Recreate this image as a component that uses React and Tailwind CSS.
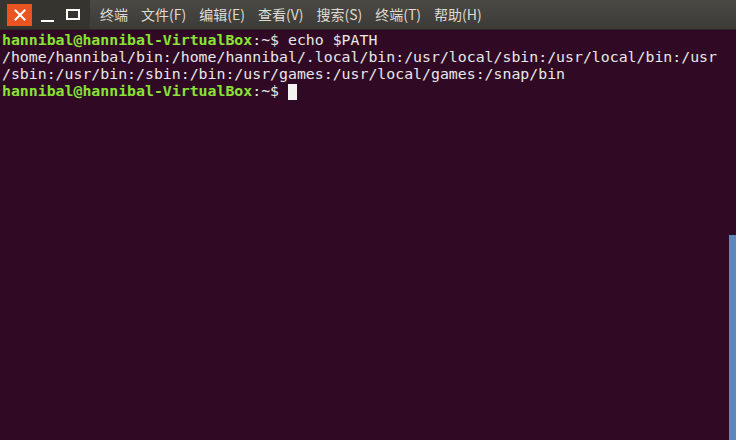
const menus = ["文件(F)", "编辑(E)", "查看(V)", "搜索(S)", "终端(T)", "帮助(H)"];

const Prompt = () => (
  <>
    <span className="font-bold text-[#8ae234]">hannibal@hannibal-VirtualBox</span>
    <span className="text-[#e8e8e8]">:~$ </span>
  </>
);

export default function App() {
  return (
    <div className="w-[736px] h-[440px] flex flex-col bg-[#300a24] overflow-hidden">
      <div className="h-[30px] flex items-center bg-gradient-to-b from-[#4a4944] to-[#3c3b37] border-b border-[#2a2925]">
        <div className="flex items-center h-full pl-[7px] pr-[6px] bg-[#35342f]">
          <div className="w-[25px] h-[22px] bg-[#e95420] flex items-center justify-center">
            <svg width="12" height="12" viewBox="0 0 12 12">
              <path d="M1.5 1.5 L10.5 10.5 M10.5 1.5 L1.5 10.5" stroke="#fff" strokeWidth="2" strokeLinecap="square" />
            </svg>
          </div>
          <div className="w-[30px] h-[22px] flex items-end justify-center pb-[4px]">
            <div className="w-[13px] h-[2px] bg-white" />
          </div>
          <div className="w-[22px] h-[22px] flex items-center justify-center">
            <div className="w-[14px] h-[11px] border-2 border-white" />
          </div>
        </div>
        <div
          className="flex items-center gap-[13px] pl-[10px] text-[14px] text-[#dfdbd2]"
          style={{ fontFamily: '"Noto Sans CJK SC", "Noto Sans", sans-serif' }}
        >
          <span>终端</span>
          {menus.map((m) => (
            <span key={m}>{m}</span>
          ))}
        </div>
      </div>
      <div className="flex-1 relative">
        <div
          className="pl-[2px] pt-[2px] text-[14.85px] leading-[17px] text-[#e8e8e8] whitespace-pre"
          style={{ fontFamily: '"DejaVu Sans Mono", "Liberation Mono", monospace' }}
        >
          <div>
            <Prompt />
            echo $PATH
          </div>
          <div>/home/hannibal/bin:/home/hannibal/.local/bin:/usr/local/sbin:/usr/local/bin:/usr</div>
          <div>/sbin:/usr/bin:/sbin:/bin:/usr/games:/usr/local/games:/snap/bin</div>
          <div className="flex items-center">
            <Prompt />
            <span className="inline-block w-[9px] h-[16px] bg-[#f2f2f2]" />
          </div>
        </div>
        <div className="absolute right-0 top-[205px] bottom-0 w-[7px] bg-[#5f86bd]" />
      </div>
    </div>
  );
}
